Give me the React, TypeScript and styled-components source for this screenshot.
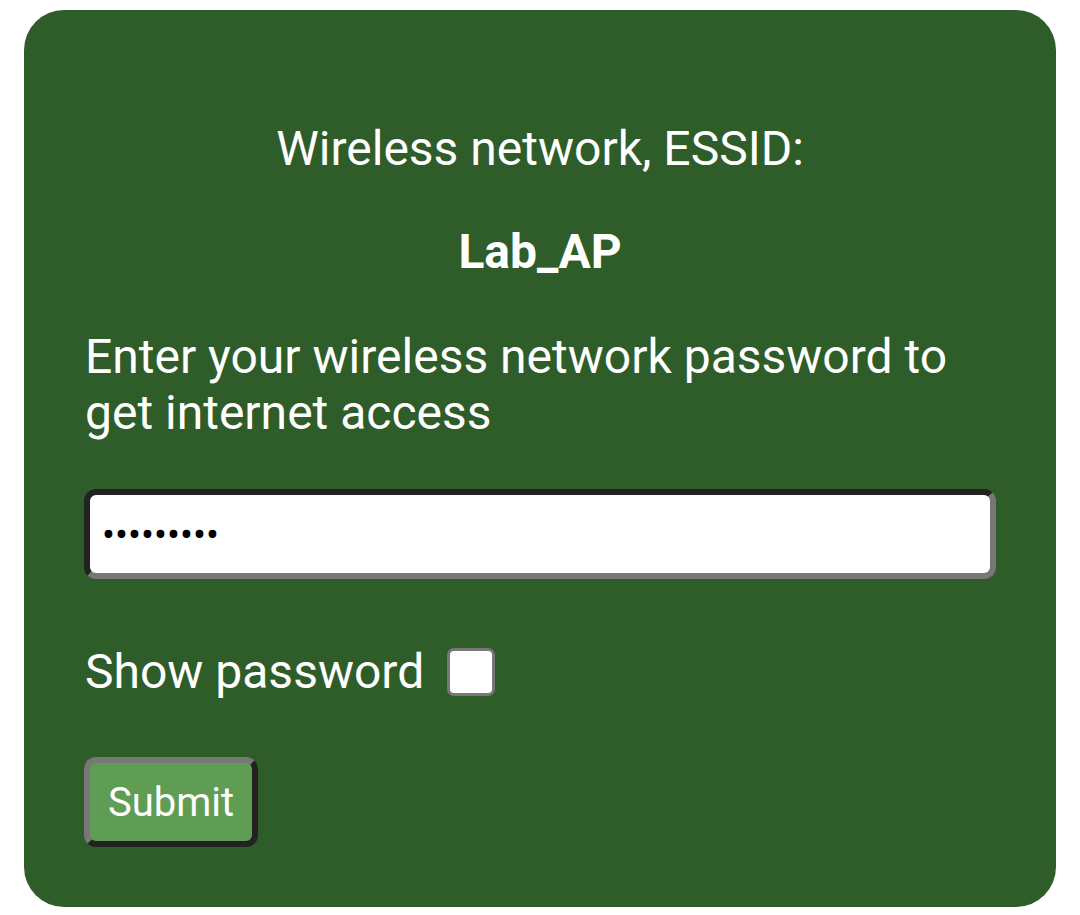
import React, { useState } from "react";
import styled, { createGlobalStyle } from "styled-components";

const Global = createGlobalStyle`
  html, body { margin: 0; padding: 0; background: #ffffff; }
  body { font-family: Roboto, "Noto Sans", sans-serif; }
`;

const Page = styled.div`
  padding: 10px 24px 8px 24px;
`;

const Card = styled.form`
  background: #2f5d29;
  border-radius: 40px;
  height: 897px;
  box-sizing: border-box;
  padding: 111px 60px 0 60px;
  color: #ffffff;
  display: flex;
  flex-direction: column;
`;

const Heading = styled.div<{ $bold?: boolean }>`
  text-align: center;
  font-size: 48px;
  line-height: 56px;
  font-weight: ${(p) => (p.$bold ? 700 : 400)};
  margin-bottom: ${(p) => (p.$bold ? "49px" : "47px")};
`;

const Prompt = styled.p`
  margin: 0 0 48px 1px;
  font-size: 48px;
  line-height: 56px;
`;

const PasswordInput = styled.input`
  box-sizing: border-box;
  width: 100%;
  height: 90px;
  border: 6px solid;
  border-top-color: #222;
  border-left-color: #222;
  border-right-color: #777;
  border-bottom-color: #777;
  border-radius: 12px;
  background: #fff;
  font-family: Roboto, "Noto Sans", sans-serif;
  font-size: 38.5px;
  padding: 0 0 0 12px;
  color: #000;
  letter-spacing: 0;
  outline: none;
`;

const ShowRow = styled.label`
  display: flex;
  align-items: center;
  gap: 23px;
  margin-top: 65px;
  margin-left: 1px;
  font-size: 48px;
  line-height: 56px;
`;

const Box = styled.span`
  display: inline-block;
  width: 42px;
  height: 42px;
  border: 3px solid #777;
  border-radius: 7px;
  background: #fff;
`;

const SubmitButton = styled.button`
  margin-top: 57px;
  align-self: flex-start;
  height: 90px;
  box-sizing: border-box;
  padding: 0 18px;
  background: #5f9c54;
  color: #fff;
  font-family: Roboto, "Noto Sans", sans-serif;
  font-size: 40px;
  border: 6px solid;
  border-top-color: #777;
  border-left-color: #777;
  border-right-color: #222;
  border-bottom-color: #222;
  border-radius: 12px;
`;

export default function App() {
  const [pw] = useState("123456789");
  return (
    <>
      <Global />
      <Page>
        <Card onSubmit={(e) => e.preventDefault()}>
          <Heading>Wireless network, ESSID:</Heading>
          <Heading $bold>Lab_AP</Heading>
          <Prompt>Enter your wireless network password to get internet access</Prompt>
          <PasswordInput type="password" defaultValue={pw} />
          <ShowRow>
            Show password
            <Box />
          </ShowRow>
          <SubmitButton type="submit">Submit</SubmitButton>
        </Card>
      </Page>
    </>
  );
}
